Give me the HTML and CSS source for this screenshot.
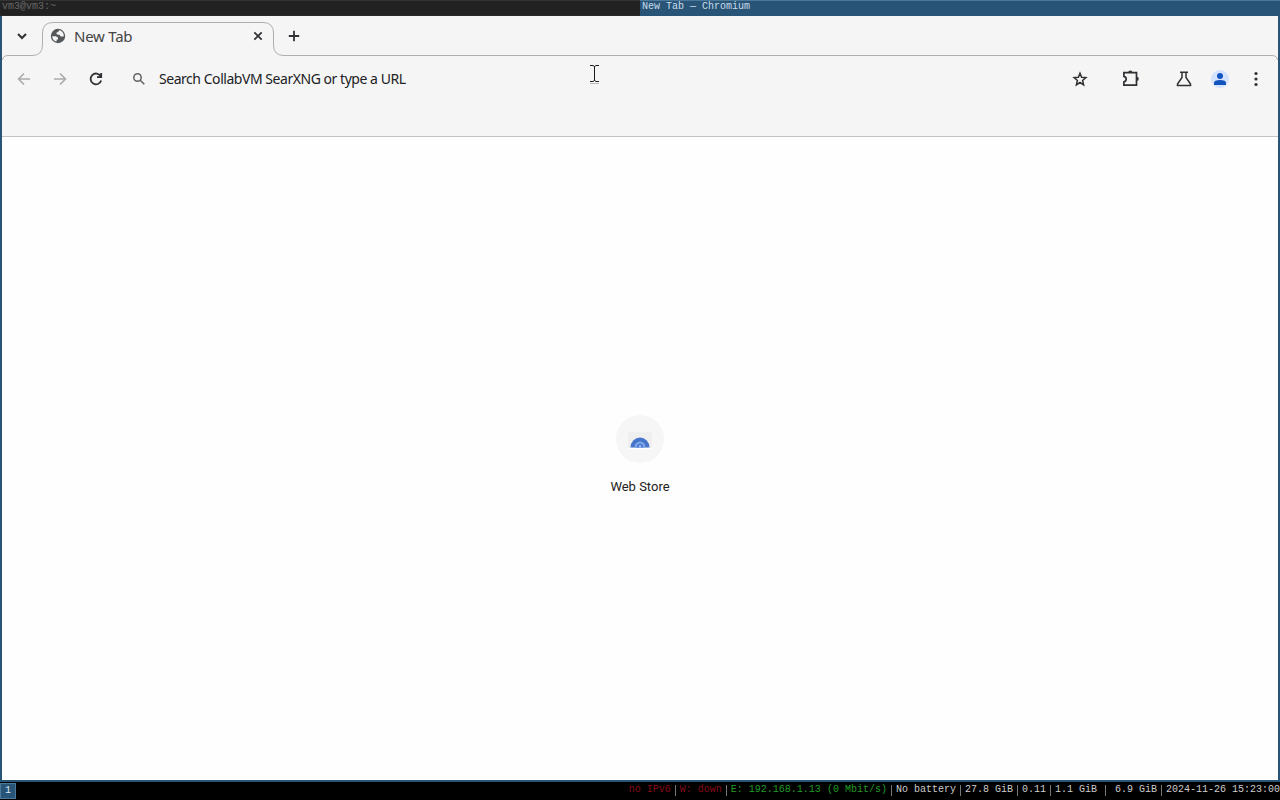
FILE: index.html
```html
<!DOCTYPE html>
<html lang="en">
<head>
<meta charset="utf-8">
<title>New Tab</title>
<link rel="stylesheet" href="styles.css">
</head>
<body>
<div class="titles"><div class="title">vm3@vm3:~</div><div class="title active">New Tab — Chromium</div></div>
<main class="window">
  <header class="chrome">
    <svg class="outline" width="1276" height="60" viewBox="2 15 1276 60"><path d="M2.500 60Q3 55.500 8 55.500H32Q42.500 55.500 42.500 45V33Q42.500 22.500 53 22.500H263Q273.500 22.500 273.500 33V45Q273.500 55.500 284 55.500H1272Q1277 55.500 1277.500 60" fill="none" stroke="#afafaf"/></svg>
    <div class="tabs">
      <svg class="chevron" width="12" height="12" viewBox="0 0 12 12"><path d="M2 4l4 4 4-4" class="line heavy"/></svg>
      <div class="tab">
        <svg width="16" height="16" viewBox="0 0 16 16"><circle cx="8" cy="8" r="7.200" fill="#55585b"/><path d="M9 2.200L8.200 4.200H6.600V6L8 6.800H9.600L10.600 8.600H13.700C14.300 5.600 12.300 2.700 9 2.200zM2.200 8.200H6L8 9.800V11.400H6.600V13.600C4 13 2.200 10.800 2.200 8.200z" fill="#f5f5f5"/></svg>
        <span>New Tab</span>
        <svg class="close" width="12" height="12" viewBox="0 0 12 12"><path d="M2.300 2.300l7.400 7.400M9.700 2.300L2.300 9.700" class="line"/></svg>
      </div>
      <svg class="plus" width="12" height="12" viewBox="0 0 12 12"><path d="M6 .8v10.400M.8 6h10.400" class="line"/></svg>
    </div>
    <div class="toolbar">
      <svg width="16" height="16" viewBox="0 0 16 16"><path d="M14 8H3M8 2.500L2.500 8 8 13.500" class="line faded"/></svg>
      <svg width="16" height="16" viewBox="0 0 16 16"><path d="M2 8h11M8 2.500L13.500 8 8 13.500" class="line faded"/></svg>
      <svg width="16" height="16" viewBox="0 0 16 16"><path d="M12.700 5.200A5.400 5.400 0 1 0 13.200 9.500M13.200 2v4.200H9" class="line"/></svg>
      <div class="omnibox">
        <svg width="14" height="14" viewBox="0 0 14 14"><circle cx="5.500" cy="5.500" r="3.700" class="line search"/><path d="M8.300 8.300l4 4" class="line search"/></svg>
        <span>Search CollabVM SearXNG or type a URL</span>
      </div>
      <div class="actions">
        <svg width="18" height="18" viewBox="0 0 18 18"><path d="M9 3.200l1.600 4 4.300.4-3.300 2.900 1 4.300L9 12.500l-3.600 2.300 1-4.300-3.300-2.900 4.300-.4z" class="line star"/></svg>
        <svg class="puzzle" width="20" height="20" viewBox="0 0 20 20"><path d="M2.900 3.700H15.500V16.200H2.900V12.900C6 12.200 6 8 2.900 7.300z" class="line puzzle-line"/><path d="M7.200 3.500a2.100 2.100 0 0 1 4.200 0zM15.700 7.800a2.100 2.100 0 0 1 0 4.200z" fill="#303134"/></svg>
        <svg class="flask" width="18" height="18" viewBox="0 0 18 18"><path d="M5 2.300h8M7 2.500V7.500L2.500 14v1.500h13V14L11 7.500v-5" class="line star"/></svg>
        <div class="avatar"><svg width="18" height="18" viewBox="0 0 18 18"><circle cx="9" cy="6" r="3" fill="#1254bd"/><path d="M3 15v-2q0-3 6-3t6 3v2z" fill="#1254bd"/></svg></div>
        <svg class="dots" width="6" height="16" viewBox="0 0 6 16"><circle cx="3" cy="2.500" r="1.600"/><circle cx="3" cy="8" r="1.600"/><circle cx="3" cy="13.500" r="1.600"/></svg>
      </div>
    </div>
  </header>
  <section class="page">
    <div class="tile"><svg width="28" height="28" viewBox="0 0 28 28"><path d="M2 4h24v16H2z" fill="#efeff0"/><path d="M4.500 19.500a9.500 10 0 0 1 19 0z" fill="#4676cb"/><path d="M8.500 19.500a5.500 6 0 0 1 11 0z" fill="#85aaea"/><path d="M10.500 19.500a3.500 4 0 0 1 7 0z" fill="#4b7fd8"/><path d="M13 19.500v-2h2v2z" fill="#a9c6f5"/><path d="M2 20h24v1.500H2z" fill="#fff"/></svg></div>
    <span class="label">Web Store</span>
  </section>
</main>
<footer class="status">
  <span class="workspace">1</span>
  <div class="readings"><span class="red">no IPv6</span><i></i><span class="red">W: down</span><i></i><span class="green">E: 192.168.1.13 (0 Mbit/s)</span><i></i><span>No battery</span><i></i><span>27.8 GiB</span><i></i><span>0.11</span><i></i><span>1.1 GiB</span><i class="wide"></i><span>6.9 GiB</span><i></i><span>2024-11-26 15:23:00</span></div>
</footer>
<svg class="pointer" width="11" height="20" viewBox="0 0 11 20"><path d="M1 1.500h3l1.500 1 1.500-1h3M5.500 2v15M1 17.500h3l1.500-1 1.500 1h3" fill="none" stroke="#1c1c1c"/><path d="M1 19.500h9" stroke="#bbb"/></svg>
</body>
</html>
```
FILE: styles.css
```css
* { box-sizing: border-box; }
body { margin: 0; width: 1280px; height: 800px; overflow: hidden; background: #000; display: flex; flex-direction: column; font-family: "Noto Sans", sans-serif; }
svg { display: block; flex: none; }
.titles { display: flex; height: 16px; flex: none; font: 10px/11px "Liberation Mono", monospace; }
.title { flex: 1; background: #222; color: #666; padding: 1px 2px; border-top: 1px solid #333; border-bottom: 1px solid #292929; line-height: 10px; }
.title.active { background: #285577; color: #c9dcea; border-color: #4c7899 #4c7899 #285577; }
.window { height: 766px; flex: none; border: solid #285577; border-width: 0 2px 2px; background: #fefefe; display: flex; flex-direction: column; }
.chrome { height: 121px; flex: none; position: relative; background: #f5f5f5; border-bottom: 1px solid #c2c2c2; }
.outline { position: absolute; left: 0; top: -1px; }
.line { fill: none; stroke: #303134; stroke-width: 1.8; }
.heavy { stroke-width: 2; }
.faded { stroke: #aaa; stroke-width: 1.6; }
.search { stroke: #606264; stroke-width: 1.5; }
.star { stroke-width: 1.5; }
.puzzle-line { stroke-width: 1.7; }
.tabs { height: 40px; display: flex; align-items: center; padding-left: 14px; position: relative; }
.tab { margin-left: 22px; width: 214px; display: flex; align-items: center; color: #434343; font-size: 15px; line-height: 20px; letter-spacing: -.25px; }
.tab span { margin-left: 8px; padding-bottom: 1px; }
.close { margin-left: auto; }
.plus { margin-left: 24px; }
.toolbar { height: 46px; display: flex; align-items: center; gap: 20px; padding-left: 14px; position: relative; }
.omnibox { display: flex; align-items: center; gap: 13px; margin-left: 8px; color: #202124; font-size: 14px; line-height: 20px; letter-spacing: -.46px; white-space: nowrap; }
.actions { margin-left: auto; display: flex; align-items: center; padding-right: 19px; }
.puzzle { margin-left: 32px; }
.flask { margin-left: 34px; }
.avatar { width: 18px; height: 18px; margin: 0 1px 0 18px; border-radius: 50%; background: #d3e3fd; display: flex; align-items: center; justify-content: center; }
.dots { margin-left: 23px; fill: #303134; }
.page { flex: 1; display: flex; flex-direction: column; align-items: center; padding-top: 278px; }
.tile { width: 48px; height: 48px; border-radius: 50%; background: #f6f6f7; display: flex; align-items: center; justify-content: center; padding-top: 6px; }
.label { margin-top: 15px; font: 13px/18px Roboto, sans-serif; color: #222; }
.status { height: 18px; flex: none; display: flex; justify-content: space-between; font: 10px/14px "Liberation Mono", monospace; color: #ccc; white-space: pre; }
.workspace { width: 16px; height: 16px; margin-top: 1px; border: 1px solid #4c7899; background: #285577; color: #d8e8f3; text-align: center; line-height: 13px; }
.readings { display: flex; height: 16px; line-height: 15px; }
.readings i { width: 9px; display: flex; justify-content: center; padding-top: 3px; }
.readings i::before { content: ""; width: 1px; height: 11px; background: #777; }
.readings .wide { width: 18px; }
.red { color: #850919; }
.green { color: #209c27; }
.pointer { position: absolute; left: 589px; top: 64px; }
```
